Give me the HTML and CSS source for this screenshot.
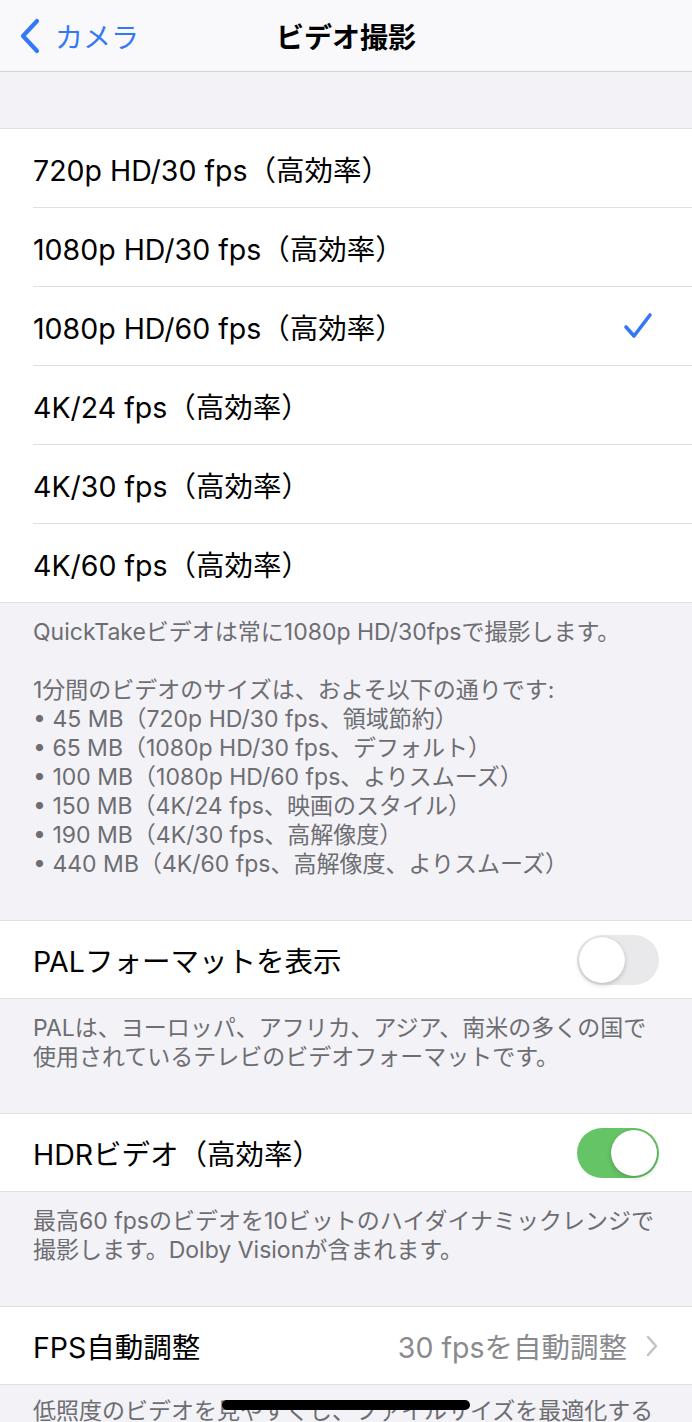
FILE: index.html
```html
<!DOCTYPE html>
<html lang="ja">
<head>
<meta charset="utf-8">
<link rel="stylesheet" href="styles.css">
</head>
<body>
<div class="screen">
  <header class="nav">
    <div class="back">
      <svg class="back-chev" width="24" height="36" viewBox="0 0 24 36"><path d="M19 3 L5 18 L19 33" fill="none" stroke="#3478f6" stroke-width="4.2" stroke-linecap="round" stroke-linejoin="round"/></svg>
      <span class="back-label">カメラ</span>
    </div>
    <div class="title">ビデオ撮影</div>
  </header>
  <div class="gap-top"></div>

  <section class="group">
    <div class="row"><span class="label">720p HD/30 fps（高効率）</span></div>
    <div class="row"><span class="label">1080p HD/30 fps（高効率）</span></div>
    <div class="row"><span class="label">1080p HD/60 fps（高効率）</span>
      <svg class="check" width="30" height="28" viewBox="0 0 30 28"><path d="M3 15 L11 24 L27 3" fill="none" stroke="#3478f6" stroke-width="3.6" stroke-linecap="round" stroke-linejoin="round"/></svg>
    </div>
    <div class="row"><span class="label">4K/24 fps（高効率）</span></div>
    <div class="row"><span class="label">4K/30 fps（高効率）</span></div>
    <div class="row last6"><span class="label">4K/60 fps（高効率）</span></div>
  </section>
  <div class="footer">
    <p>QuickTakeビデオは常に1080p HD/30fpsで撮影します。</p>
    <p class="blank">&nbsp;</p>
    <p>1分間のビデオのサイズは、およそ以下の通りです:</p>
    <p>• 45 MB（720p HD/30 fps、領域節約）</p>
    <p>• 65 MB（1080p HD/30 fps、デフォルト）</p>
    <p>• 100 MB（1080p HD/60 fps、よりスムーズ）</p>
    <p>• 150 MB（4K/24 fps、映画のスタイル）</p>
    <p>• 190 MB（4K/30 fps、高解像度）</p>
    <p>• 440 MB（4K/60 fps、高解像度、よりスムーズ）</p>
  </div>

  <section class="group">
    <div class="row single"><span class="label">PALフォーマットを表示</span>
      <span class="toggle"><span class="knob"></span></span>
    </div>
  </section>
  <div class="footer">
    <p>PALは、ヨーロッパ、アフリカ、アジア、南米の多くの国で</p>
    <p>使用されているテレビのビデオフォーマットです。</p>
  </div>

  <section class="group">
    <div class="row single"><span class="label">HDRビデオ（高効率）</span>
      <span class="toggle on"><span class="knob"></span></span>
    </div>
  </section>
  <div class="footer">
    <p>最高60 fpsのビデオを10ビットのハイダイナミックレンジで</p>
    <p>撮影します。Dolby Visionが含まれます。</p>
  </div>

  <section class="group">
    <div class="row single"><span class="label">FPS自動調整</span>
      <span class="value">30 fpsを自動調整</span>
      <svg class="chev" width="14" height="24" viewBox="0 0 14 24"><path d="M3 3 L11 12 L3 21" fill="none" stroke="#c4c4c7" stroke-width="2.6" stroke-linecap="round" stroke-linejoin="round"/></svg>
    </div>
  </section>
  <div class="footer last-footer">
    <p>低照度のビデオを見やすくし、ファイルサイズを最適化する</p>
  </div>

  <div class="home-bar"></div>
</div>
</body>
</html>
```

FILE: styles.css
```css
html, body {
  margin: 0;
  padding: 0;
}
body {
  background: #f2f2f7;
  font-family: Inter, "Noto Sans CJK JP", sans-serif;
  color: #000;
}
.screen {
  width: 692px;
  height: 1422px;
  overflow: hidden;
  position: relative;
  background: #f2f2f7;
}
.nav {
  height: 71px;
  background: #f9f9fb;
  border-bottom: 1px solid #d4d4d8;
  display: flex;
  align-items: center;
  justify-content: center;
  position: relative;
}
.back {
  position: absolute;
  left: 18px;
  top: 0;
  height: 71px;
  display: flex;
  align-items: center;
  gap: 13px;
}
.back-label {
  color: #3478f6;
  font-size: 28px;
}
.title {
  font-size: 28px;
  font-weight: 700;
}
.gap-top {
  height: 56px;
}
.group {
  background: #fff;
  border-top: 1px solid #dedee3;
  border-bottom: 1px solid #dedee3;
}
.row {
  height: 78px;
  margin-left: 33px;
  padding-right: 33px;
  display: flex;
  align-items: center;
  border-bottom: 1px solid #dedee3;
}
.row.last6 {
  border-bottom: none;
}
.row.single {
  border-bottom: none;
  height: 77px;
}
.label {
  font-size: 28.5px;
  flex: 1;
  white-space: nowrap;
}
.check {
  margin-right: 6px;
}
.footer {
  padding: 15px 33px 41px 33px;
  color: #6d6d72;
  font-size: 23px;
  line-height: 29px;
}
.footer.last-footer {
  padding-top: 12px;
}
.footer p {
  margin: 0;
  white-space: nowrap;
}
.toggle {
  width: 82px;
  height: 50px;
  border-radius: 25px;
  background: #e9e9eb;
  position: relative;
  flex: none;
}
.toggle .knob {
  position: absolute;
  top: 2px;
  left: 2px;
  width: 46px;
  height: 46px;
  border-radius: 50%;
  background: #fff;
  box-shadow: 0 2px 5px rgba(0,0,0,0.18), 0 0 1px rgba(0,0,0,0.15);
}
.toggle.on {
  background: #65c466;
}
.toggle.on .knob {
  left: 34px;
}
.value {
  font-size: 28.5px;
  color: #8a8a8e;
  margin-right: 18px;
  white-space: nowrap;
}
.chev {
  flex: none;
}
.home-bar {
  position: absolute;
  left: 222px;
  top: 1400px;
  width: 248px;
  height: 10px;
  border-radius: 5px;
  background: #000;
}
```
